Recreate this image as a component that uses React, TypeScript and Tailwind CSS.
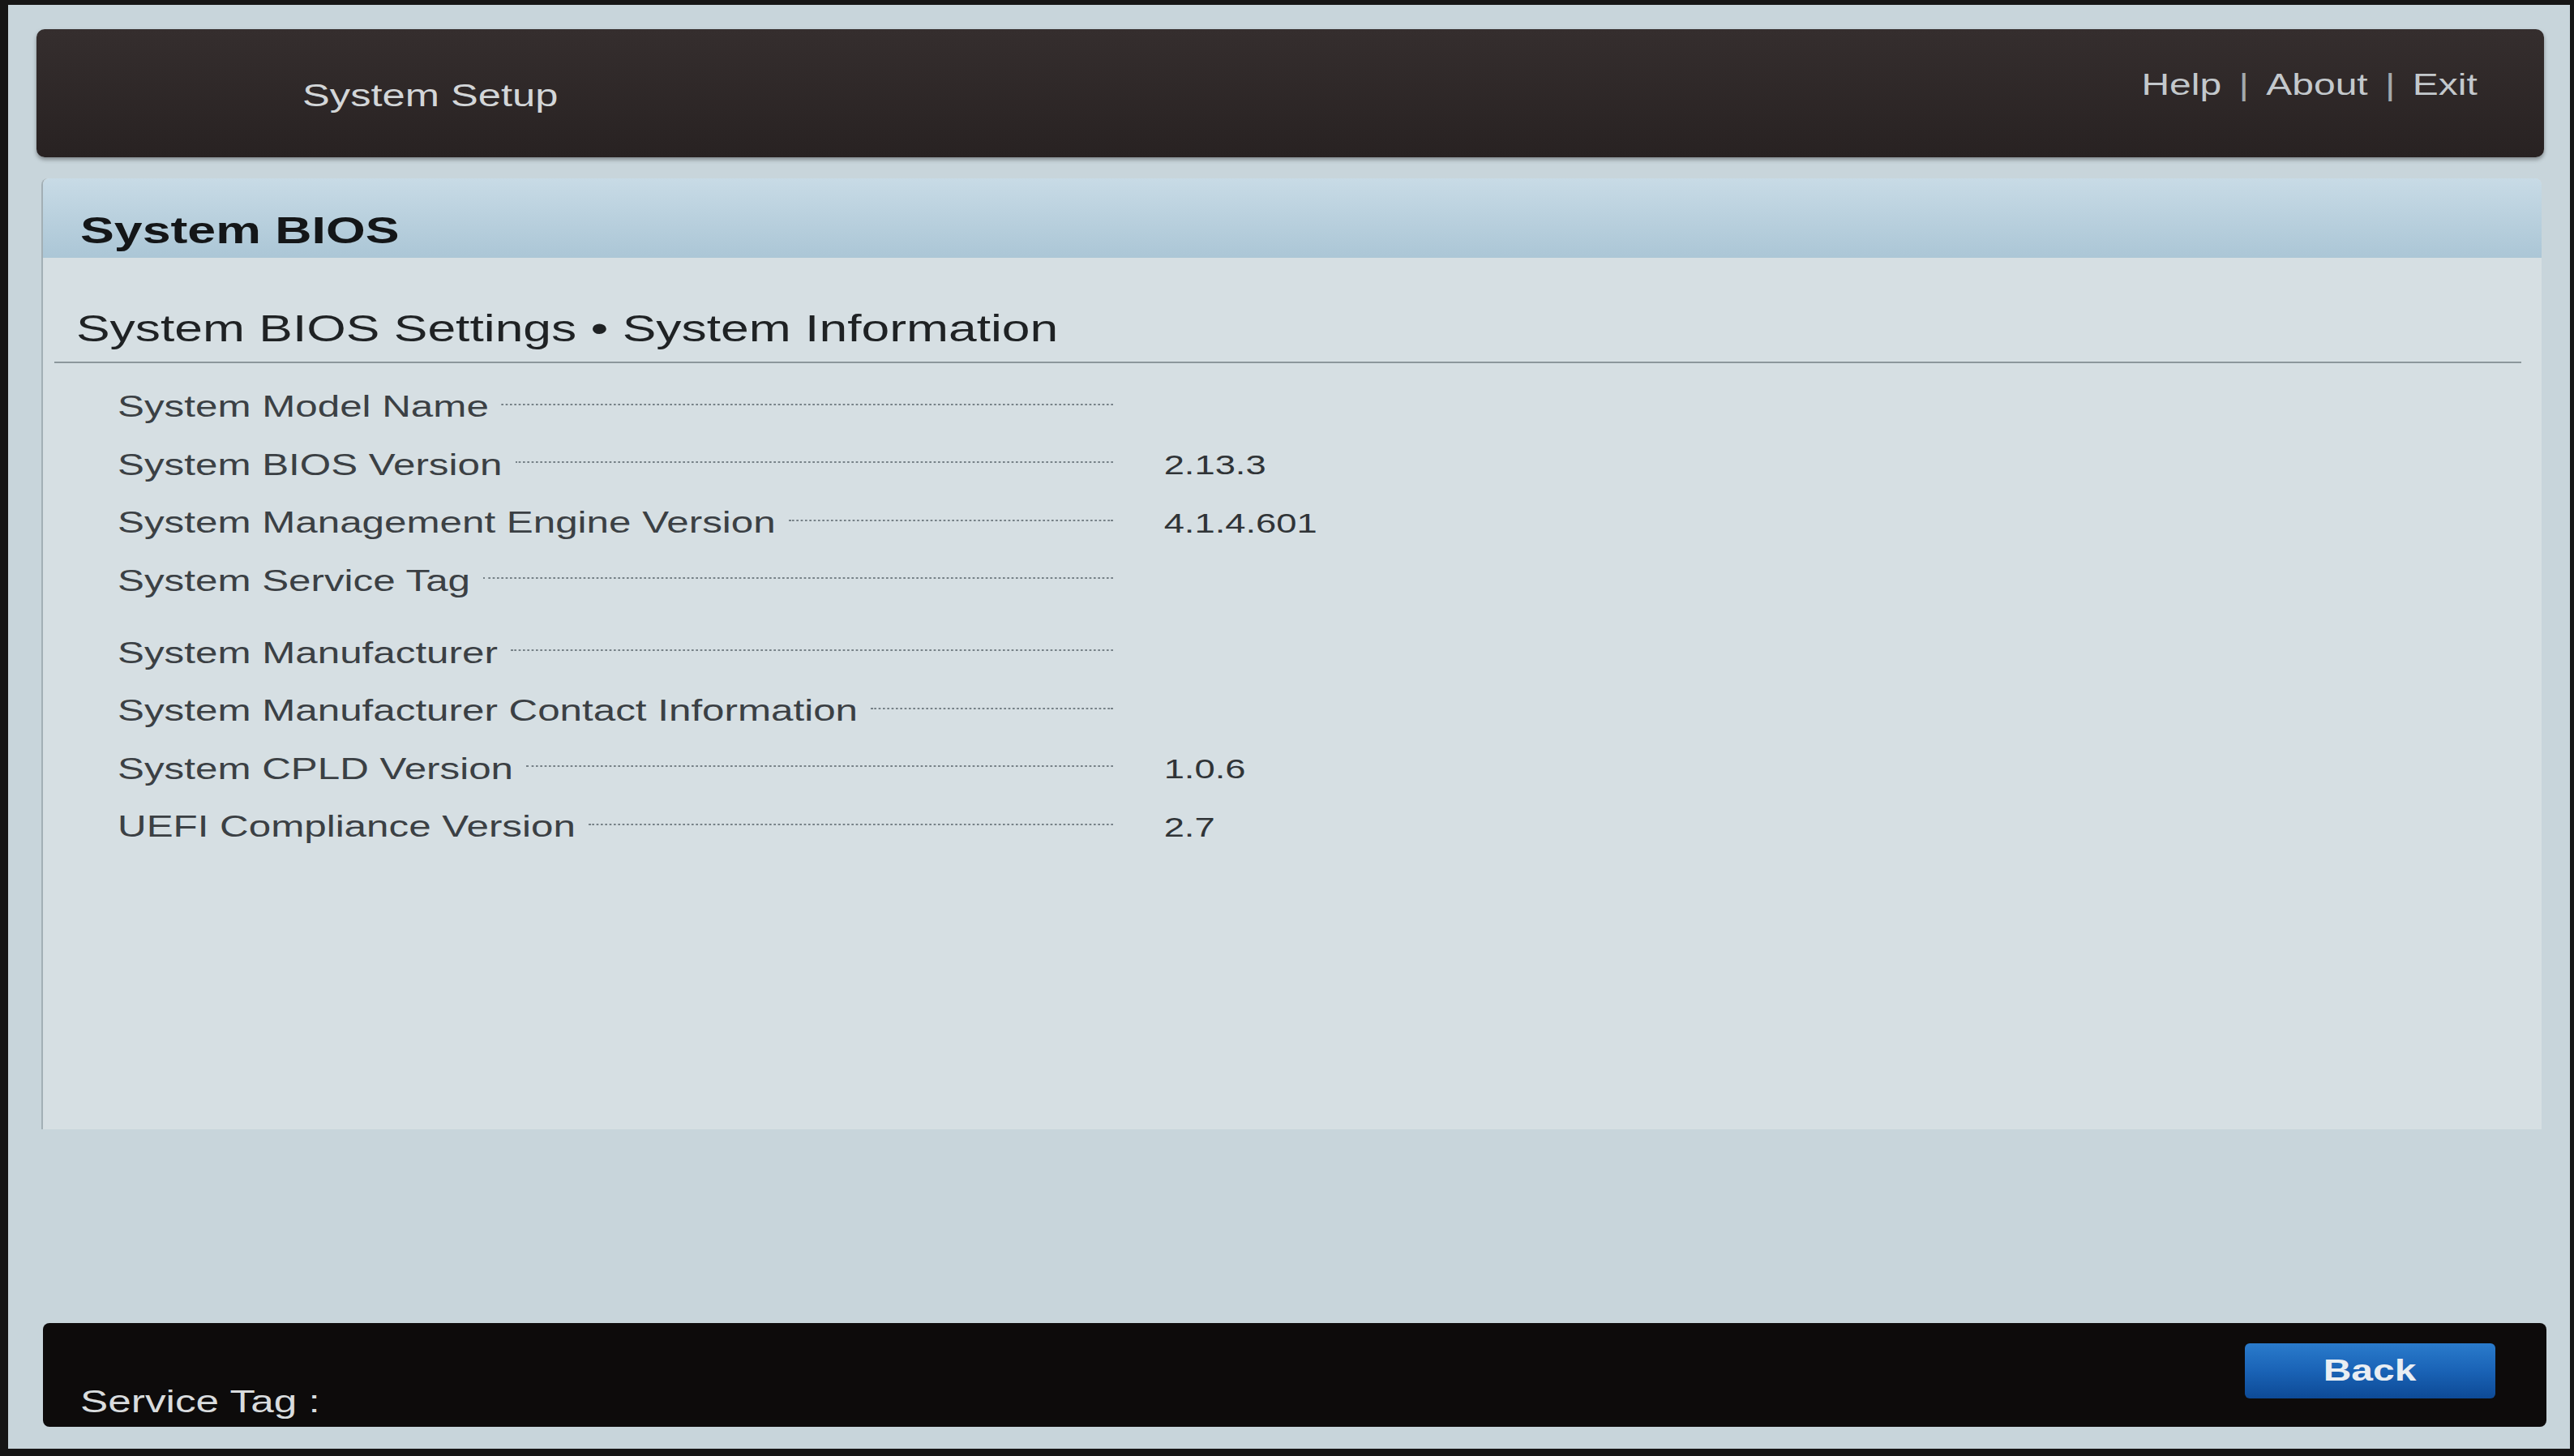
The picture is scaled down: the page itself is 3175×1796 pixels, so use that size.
import React from "react";

type Row = { label: string; value: string; gap?: boolean };

const rows: Row[] = [
  { label: "System Model Name", value: "" },
  { label: "System BIOS Version", value: "2.13.3" },
  { label: "System Management Engine Version", value: "4.1.4.601" },
  { label: "System Service Tag", value: "" },
  { label: "System Manufacturer", value: "", gap: true },
  { label: "System Manufacturer Contact Information", value: "" },
  { label: "System CPLD Version", value: "1.0.6" },
  { label: "UEFI Compliance Version", value: "2.7" },
];

function InfoRow({ row }: { row: Row }) {
  return (
    <div className={`flex h-[71.5px] items-center ${row.gap ? "mt-[17.5px]" : ""}`}>
      <div className="flex w-[921px] items-center">
        <span className="whitespace-nowrap text-[37px] leading-none text-[#3b4044]">{row.label}</span>
        <div className="mb-[6px] ml-[12px] h-0 flex-1 border-b-2 border-dotted border-[#778288]" />
      </div>
      <span className="ml-[47px] whitespace-nowrap text-[34px] leading-none text-[#303437]">{row.value}</span>
    </div>
  );
}

export default function App() {
  return (
    <div className="flex h-[1796px] w-[3175px] flex-col overflow-hidden bg-[#161616] pb-[9px] pl-[10px] pr-[5px] pt-[6px] font-['Liberation_Sans',Arial,sans-serif]">
      <div className="flex flex-1 flex-col bg-[#c8d5db]">
        {/* Header */}
        <div className="ml-[35px] mr-[32px] mt-[30px] flex h-[158px] items-center justify-between rounded-[10px] bg-linear-to-b from-[#352e2e] to-[#282222] shadow-[0_3px_5px_rgba(0,0,0,0.35)]">
          <span className="ml-[328px] mt-[6px] inline-block origin-left scale-x-[1.3333] whitespace-nowrap text-[38px] leading-none text-[#d3d6d8]">
            System Setup
          </span>
          <div className="mb-[20px] mr-[82px] flex origin-right scale-x-[1.3333] items-center whitespace-nowrap text-[36px] leading-none text-[#c3c8cc]">
            <span>Help</span>
            <span className="px-[16px] text-[#a3a9ad]">|</span>
            <span>About</span>
            <span className="px-[16px] text-[#a3a9ad]">|</span>
            <span>Exit</span>
          </div>
        </div>

        {/* Main panel */}
        <div className="ml-[41px] mr-[35px] mt-[26px] flex h-[1173px] flex-col rounded-t-[8px] border-l-2 border-[#a2afb5] bg-[#d6dfe3]">
          <div className="flex h-[98px] rounded-t-[8px] bg-linear-to-b from-[#c8dbe6] to-[#abc6d6] pl-[46px] pt-[40px]">
            <span className="inline-block origin-left scale-x-[1.3333] whitespace-nowrap text-[47px] font-bold leading-[48px] text-[#141618]">
              System BIOS
            </span>
          </div>
          <div className="pl-[41px] pt-[61px]">
            <span className="inline-block origin-left scale-x-[1.3333] whitespace-nowrap text-[46.8px] leading-[52px] text-[#1f2224]">
              System BIOS Settings • System Information
            </span>
          </div>
          <div className="ml-[14px] mr-[25px] mt-[15px] h-[2px] bg-[#8c979c]" />
          <div className="pl-[92px] pt-[18px]">
            <div className="flex w-fit origin-left scale-x-[1.3333] flex-col">
              {rows.map((r) => (
                <InfoRow key={r.label} row={r} />
              ))}
            </div>
          </div>
        </div>

        {/* Footer bar */}
        <div className="ml-[43px] mr-[29px] mt-[239px] flex h-[128px] items-start justify-between rounded-[8px] bg-[#0d0b0b]">
          <span className="ml-[46px] mt-[75px] inline-block origin-left scale-x-[1.3333] whitespace-nowrap text-[38.5px] leading-[44px] text-[#d9dcde]">
            Service Tag :
          </span>
          <button className="mr-[63px] mt-[25px] flex h-[68px] w-[309px] items-center justify-center rounded-[6px] bg-linear-to-b from-[#2a7bcc] via-[#1a63b6] to-[#0d4a96]">
            <span className="inline-block scale-x-[1.3333] text-[36px] font-bold leading-none text-[#e9eef3]">Back</span>
          </button>
        </div>
      </div>
    </div>
  );
}
